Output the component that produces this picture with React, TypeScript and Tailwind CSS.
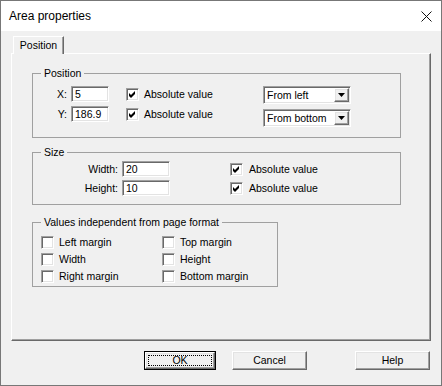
import React from 'react';

const sunken =
  'border border-t-[#a0a0a0] border-l-[#a0a0a0] border-b-white border-r-white shadow-[inset_1px_1px_0_#696969,inset_-1px_-1px_0_#e3e3e3]';
const raised =
  'border border-t-white border-l-white border-b-[#696969] border-r-[#696969] shadow-[inset_-1px_-1px_0_#a0a0a0,inset_1px_1px_0_#e3e3e3]';

const Check: React.FC<{ checked?: boolean }> = ({ checked }) => (
  <div className={`w-[13px] h-[13px] shrink-0 bg-white flex items-center justify-center ${sunken}`}>
    {checked && (
      <svg width="7" height="7" viewBox="0 0 7 7">
        <polygon points="0,2 2,4 6,0 6,3 2,7 0,5" fill="#000" />
      </svg>
    )}
  </div>
);

const Field: React.FC<{ value: string; w: string }> = ({ value, w }) => (
  <div className={`${w} h-[16px] bg-white flex items-center pl-[3px] leading-none ${sunken}`}>{value}</div>
);

const Combo: React.FC<{ value: string }> = ({ value }) => (
  <div className={`w-[88px] h-[18px] bg-white flex items-center ${sunken}`}>
    <span className="flex-1 pl-[3px] leading-none">{value}</span>
    <div className={`w-[15px] h-[14px] mr-[1px] bg-[#f0f0f0] flex items-center justify-center ${raised}`}>
      <svg width="7" height="4" viewBox="0 0 7 4">
        <polygon points="0,0 7,0 3.5,4" fill="#000" />
      </svg>
    </div>
  </div>
);

const Legend: React.FC<{ children: React.ReactNode }> = ({ children }) => (
  <legend className="ml-[8px] px-[3px] leading-[13px]">{children}</legend>
);

const CheckRow: React.FC<{ label: string; checked?: boolean; gap?: string }> = ({ label, checked, gap = 'gap-[5px]' }) => (
  <div className={`flex items-center h-[13px] ${gap}`}>
    <Check checked={checked} />
    <span className="leading-none">{label}</span>
  </div>
);

export default function App() {
  return (
    <div className="w-[442px] h-[386px] border border-[#777777] flex flex-col bg-[#f0f0f0] text-black text-[10.5px] font-['Liberation_Sans',Arial,sans-serif]">
      <div className="h-[30px] shrink-0 bg-white flex items-center pl-[8px] pr-[9px]">
        <span className="flex-1 text-[12px]">Area properties</span>
        <svg width="11" height="11" viewBox="0 0 11 11">
          <path d="M0.5 0.5 L10.5 10.5 M10.5 0.5 L0.5 10.5" stroke="#111" strokeWidth="1" />
        </svg>
      </div>

      <div className="flex-1 px-[10px] pt-[5px]">
        <div className="relative z-10 ml-[2px] -mb-[1px] w-[51px] h-[18px] bg-[#f0f0f0] border-t border-l border-r border-t-white border-l-white border-r-[#696969] shadow-[inset_-1px_0_0_#a0a0a0] flex items-center justify-center">
          Position
        </div>

        <div className="w-[420px] h-[288px] border border-t-white border-l-white border-r-[#696969] border-b-[#696969] shadow-[inset_-1px_-1px_0_#a0a0a0] pl-[20px] pt-[13px]">
          <fieldset className="w-[369px] h-[71px] border border-[#a0a0a0]">
            <Legend>Position</Legend>
            <div className="flex mt-[6px]">
              <div className="w-[230px] flex flex-col gap-[4px]">
                {[
                  ['X:', '5'],
                  ['Y:', '186.9'],
                ].map(([l, v]) => (
                  <div key={l} className="flex items-center h-[16px]">
                    <span className="w-[34px] text-right leading-none">{l}</span>
                    <div className="ml-[4px]">
                      <Field value={v} w="w-[38px]" />
                    </div>
                    <div className="ml-[17px]">
                      <CheckRow label="Absolute value" checked />
                    </div>
                  </div>
                ))}
              </div>
              <div className="flex flex-col gap-[5px]">
                <Combo value="From left" />
                <Combo value="From bottom" />
              </div>
            </div>
          </fieldset>

          <fieldset className="mt-[8px] w-[369px] h-[59px] border border-[#a0a0a0]">
            <Legend>Size</Legend>
            <div className="flex flex-col gap-[3px] mt-[2px]">
              {[
                ['Width:', '20'],
                ['Height:', '10'],
              ].map(([l, v]) => (
                <div key={l} className="flex items-center h-[16px]">
                  <span className="w-[85px] text-right leading-none">{l}</span>
                  <div className="ml-[4px]">
                    <Field value={v} w="w-[48px]" />
                  </div>
                  <div className="ml-[60px]">
                    <CheckRow label="Absolute value" checked gap="gap-[6px]" />
                  </div>
                </div>
              ))}
            </div>
          </fieldset>

          <fieldset className="mt-[11px] w-[246px] h-[71px] border border-[#a0a0a0]">
            <Legend>Values independent from page format</Legend>
            <div className="grid grid-cols-[121px_1fr] gap-y-[4px] mt-[7px] pl-[8px]">
              <CheckRow label="Left margin" />
              <CheckRow label="Top margin" />
              <CheckRow label="Width" />
              <CheckRow label="Height" />
              <CheckRow label="Right margin" />
              <CheckRow label="Bottom margin" />
            </div>
          </fieldset>
        </div>

        <div className="flex mt-[10px]">
          <div className="ml-[133px] w-[72px] h-[19px] border border-black p-0">
            <div className={`w-full h-full flex items-center justify-center p-[2px] ${raised}`}>
              <div className="w-full h-full border border-dotted border-black flex items-center justify-center">OK</div>
            </div>
          </div>
          <div className={`ml-[16px] w-[75px] h-[19px] flex items-center justify-center ${raised}`}>Cancel</div>
          <div className={`ml-[48px] w-[75px] h-[19px] flex items-center justify-center ${raised}`}>Help</div>
        </div>
      </div>
    </div>
  );
}
